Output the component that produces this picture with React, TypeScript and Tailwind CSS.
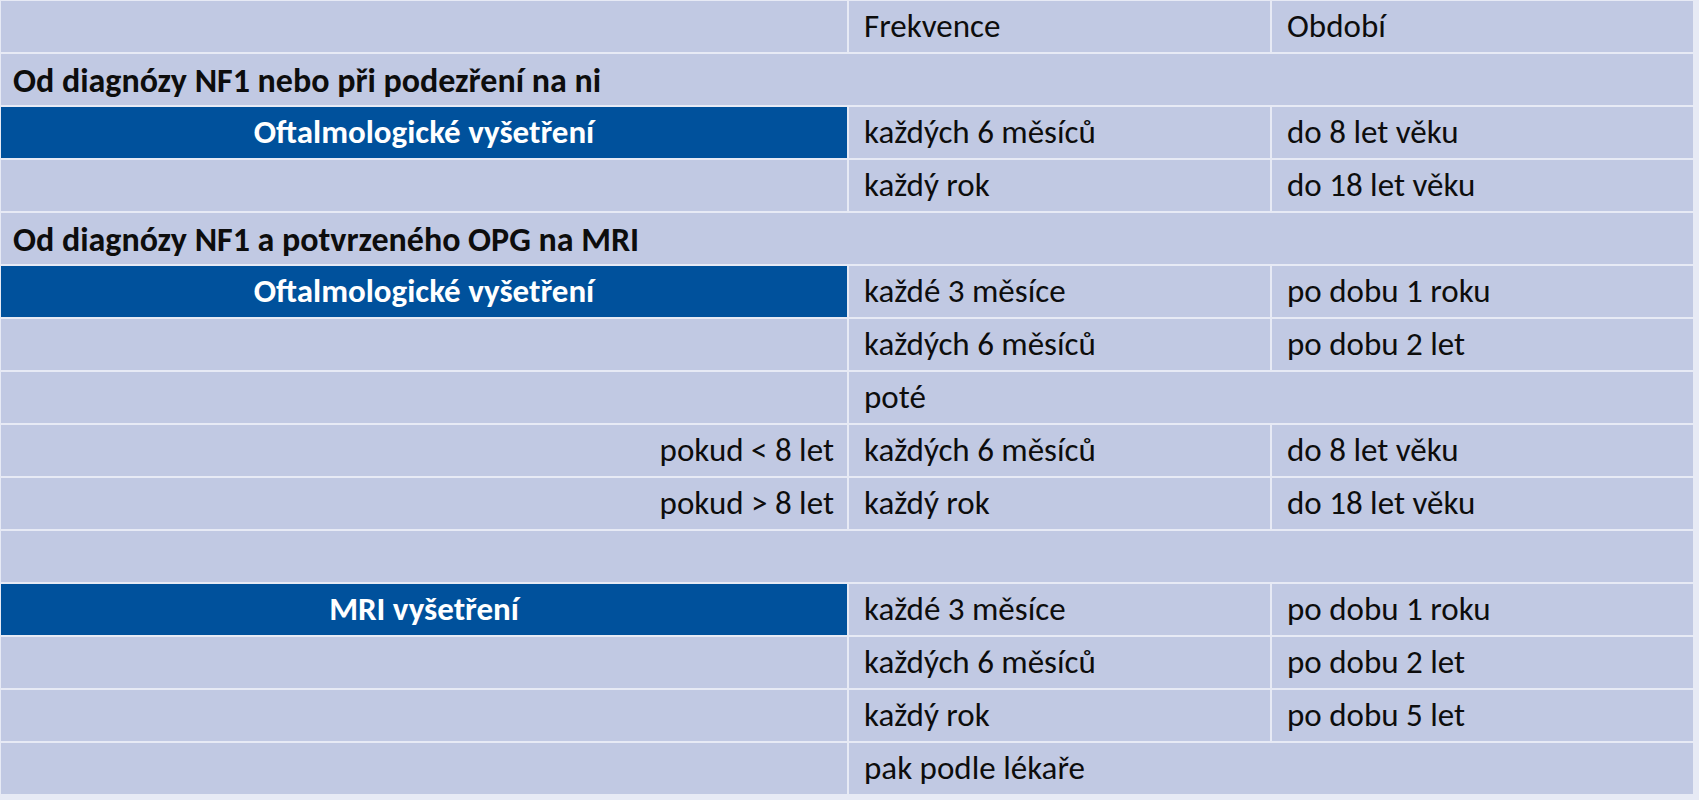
import React from "react";

const font = { fontFamily: "Carlito, 'Open Sans', 'Liberation Sans', sans-serif" };

type Row =
  | { kind: "section"; text: string }
  | { kind: "empty" }
  | { kind: "data"; left?: string; leftType?: "blue" | "right" | "none"; freq: string; period?: string; span?: boolean };

const rows: Row[] = [
  { kind: "data", leftType: "none", freq: "Frekvence", period: "Období" },
  { kind: "section", text: "Od diagnózy NF1 nebo při podezření na ni" },
  { kind: "data", leftType: "blue", left: "Oftalmologické vyšetření", freq: "každých 6 měsíců", period: "do 8 let věku" },
  { kind: "data", leftType: "none", freq: "každý rok", period: "do 18 let věku" },
  { kind: "section", text: "Od diagnózy NF1 a potvrzeného OPG na MRI" },
  { kind: "data", leftType: "blue", left: "Oftalmologické vyšetření", freq: "každé 3 měsíce", period: "po dobu 1 roku" },
  { kind: "data", leftType: "none", freq: "každých 6 měsíců", period: "po dobu 2 let" },
  { kind: "data", leftType: "none", freq: "poté", span: true },
  { kind: "data", leftType: "right", left: "pokud < 8 let", freq: "každých 6 měsíců", period: "do 8 let věku" },
  { kind: "data", leftType: "right", left: "pokud > 8 let", freq: "každý rok", period: "do 18 let věku" },
  { kind: "empty" },
  { kind: "data", leftType: "blue", left: "MRI vyšetření", freq: "každé 3 měsíce", period: "po dobu 1 roku" },
  { kind: "data", leftType: "none", freq: "každých 6 měsíců", period: "po dobu 2 let" },
  { kind: "data", leftType: "none", freq: "každý rok", period: "po dobu 5 let" },
  { kind: "data", leftType: "none", freq: "pak podle lékaře", span: true },
];

export default function App() {
  return (
    <div className="w-[1699px] h-[800px] bg-[#e7eaf5] overflow-hidden" style={font}>
      <div className="ml-px mt-px w-[1692px] grid grid-cols-[846px_421px_421px] auto-rows-[51px] gap-[2px] text-[33px] text-[#0d0d0d] leading-none">
        {rows.map((r, i) => {
          if (r.kind === "section")
            return (
              <div key={i} className="col-span-3 bg-[#c1c9e3] flex items-center pl-[12px] pt-[2px] font-bold text-[34px]">
                {r.text}
              </div>
            );
          if (r.kind === "empty") return <div key={i} className="col-span-3 bg-[#c1c9e3]" />;
          const left =
            r.leftType === "blue" ? (
              <div key={i + "l"} className="bg-[#00519c] flex items-center justify-center text-white font-bold">
                {r.left}
              </div>
            ) : r.leftType === "right" ? (
              <div key={i + "l"} className="bg-[#c1c9e3] flex items-center justify-end pr-[13px]">
                {r.left}
              </div>
            ) : (
              <div key={i + "l"} className="bg-[#c1c9e3]" />
            );
          return (
            <React.Fragment key={i}>
              {left}
              <div className={(r.span ? "col-span-2 " : "") + "bg-[#c1c9e3] flex items-center pl-[15px]"}>{r.freq}</div>
              {!r.span && <div className="bg-[#c1c9e3] flex items-center pl-[15px]">{r.period}</div>}
            </React.Fragment>
          );
        })}
      </div>
    </div>
  );
}
